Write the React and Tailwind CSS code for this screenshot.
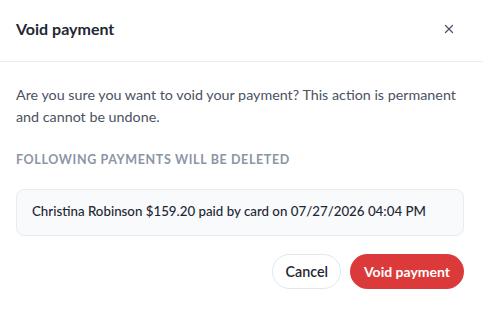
import React from 'react';
import { X } from 'lucide-react';

export default function App() {
  return (
    <div className="w-[483px] h-[309px] bg-white font-['Lato',sans-serif]">
      {/* Header */}
      <div className="flex items-center justify-between h-[62px] pl-4 pr-[27px] pb-[3px] border-b border-[#e8ebf0]">
        <h2 className="text-[16px] font-bold text-[#1f2733]">Void payment</h2>
        <button className="text-[#4a5568]">
          <X size={14} strokeWidth={2.2} />
        </button>
      </div>

      {/* Body */}
      <div className="pl-4 pr-[19px] pt-[22px]">
        <p className="text-[14.3px] leading-[22px] text-[#4a5263]">
          Are you sure you want to void your payment? This action is permanent and cannot be undone.
        </p>
        <div className="mt-[23px] text-[12.5px] font-bold tracking-[0.05em] uppercase text-[#8b95a5]">
          Following payments will be deleted
        </div>
        <div className="mt-[19px] h-[47px] flex items-center px-[15px] rounded-lg border border-[#e8ebf0] bg-[#f8fafc] text-[13.3px] font-medium text-[#1f2733]">
          Christina Robinson $159.20 paid by card on 07/27/2026 04:04 PM
        </div>
        <div className="mt-[18px] flex justify-end gap-[9px]">
          <button className="h-[35px] px-[12px] rounded-full border border-[#e2e6ec] text-[14.3px] font-semibold text-[#1f2733]">
            Cancel
          </button>
          <button className="h-[35px] px-[14px] rounded-full bg-[#dc3a3a] text-[14px] font-bold text-white">
            Void payment
          </button>
        </div>
      </div>
    </div>
  );
}
